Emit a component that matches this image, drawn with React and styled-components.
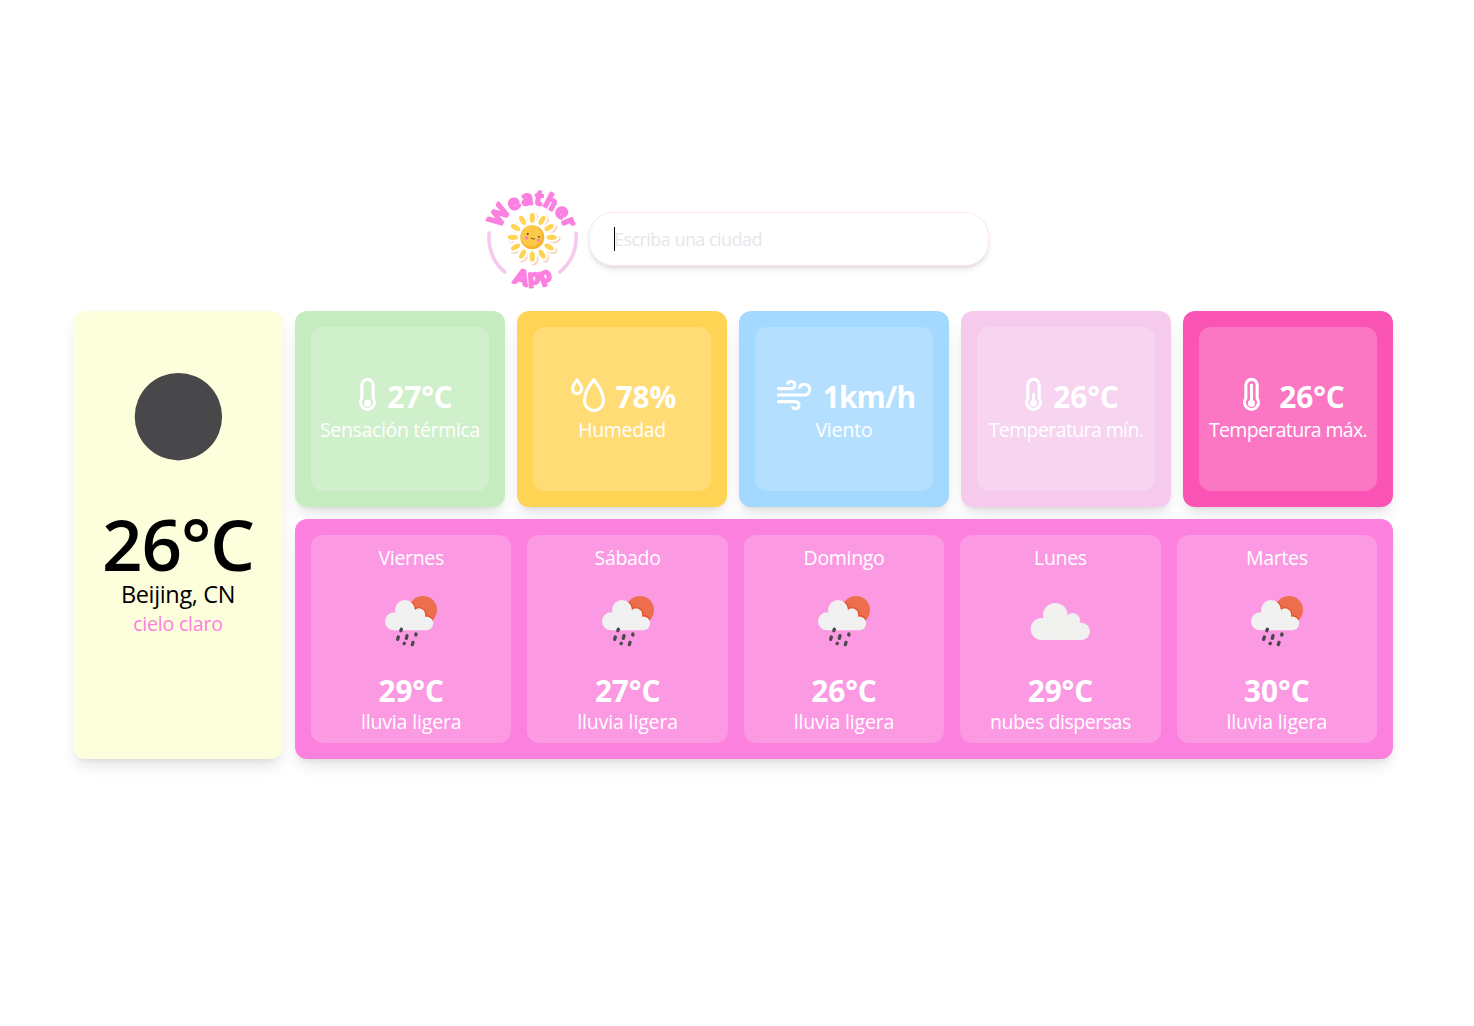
import React from "react";
import styled, { createGlobalStyle } from "styled-components";

const GlobalStyle = createGlobalStyle`
  *, *::before, *::after { box-sizing: border-box; }
  body {
    margin: 0;
    background: #fff;
    font-family: "Open Sans", "Noto Sans", sans-serif;
    font-size: 20px;
    line-height: 28px;
  }
`;

const Page = styled.main`
  width: 1466px;
  min-height: 1026px;
  padding: 185px 73px 0;
`;

const SearchBar = styled.form`
  display: flex;
  justify-content: center;
  align-items: center;
  height: 108px;
  margin-bottom: 18px;
  padding-left: 3px;
`;

const Logo = styled.svg`
  width: 110px;
  height: 115px;
  flex: none;
  margin: -3px -1px 0 0;
`;

const LogoText = styled.text`
  font-family: Lato, sans-serif;
  font-weight: 900;
  fill: #fc80df;
  stroke: #fc80df;
  stroke-width: 2.2px;
  stroke-linejoin: round;
`;

const Field = styled.label`
  position: relative;
  display: block;
  width: 400px;
  height: 54px;
`;

const Input = styled.input`
  width: 100%;
  height: 100%;
  padding: 0 24px;
  border: 1px solid #fce7f3;
  border-radius: 24px;
  outline: none;
  background: #fff;
  font: 400 18px/28px "Open Sans", sans-serif;
  letter-spacing: -0.55px;
  box-shadow: 0 4px 6px -1px rgba(0, 0, 0, 0.1), 0 2px 4px -2px rgba(0, 0, 0, 0.1);
  &::placeholder { color: #e5e7eb; opacity: 1; }
`;

const Caret = styled.span`
  position: absolute;
  left: 25px;
  top: 15px;
  width: 1px;
  height: 24px;
  background: #000;
`;

const Board = styled.section`
  display: grid;
  grid-template-columns: repeat(6, 210px);
  grid-template-rows: 196px 240px;
  gap: 12px;
`;

const Card = styled.article`
  border-radius: 12px;
  background: ${(p) => p.$color};
  box-shadow: 0 10px 15px -3px rgba(0, 0, 0, 0.1), 0 4px 6px -4px rgba(0, 0, 0, 0.1);
`;

const CurrentCard = styled(Card)`
  grid-row: span 2;
  display: flex;
  flex-direction: column;
  align-items: center;
  padding-top: 6px;
`;

const CurrentIcon = styled.svg`
  width: 200px;
  height: 200px;
`;

const CurrentTemp = styled.div`
  margin-top: -9px;
  font-size: 71px;
  line-height: 72px;
  font-weight: 600;
  letter-spacing: -1.2px;
`;

const City = styled.div`
  margin-top: -2px;
  font-size: 23.5px;
  line-height: 32px;
  font-weight: 400;
  letter-spacing: -0.35px;
`;

const Description = styled.div`
  font-size: 19.5px;
  letter-spacing: ${(p) => p.$track ?? -0.33}px;
  white-space: nowrap;
  color: ${(p) => p.$color || "inherit"};
`;

const StatCard = styled(Card)`
  display: flex;
  padding: 16px;
`;

const Panel = styled.div`
  flex: 1;
  min-width: 0;
  display: flex;
  flex-direction: column;
  align-items: center;
  justify-content: center;
  padding-top: 2px;
  border-radius: 12px;
  background: rgba(255, 255, 255, 0.2);
  color: #fff;
`;

const StatRow = styled.div`
  display: flex;
  align-items: center;
  gap: ${(p) => p.$gap}px;
  height: 40px;
  padding-left: ${(p) => p.$indent}px;
`;

const StatIcon = styled.svg`
  width: ${(p) => p.$width}px;
  height: 34px;
  margin-top: -2px;
  overflow: visible;
  fill: none;
  stroke: #fff;
  stroke-width: 2.2;
  stroke-linecap: round;
  stroke-linejoin: round;
`;

const Value = styled.div`
  height: 36px;
  font-size: 29.8px;
  line-height: 38px;
  font-weight: 700;
  letter-spacing: ${(p) => p.$track ?? -0.1}px;
`;

const ForecastCard = styled(Card)`
  grid-column: span 5;
  display: flex;
  gap: 16px;
  padding: 16px;
`;

const DayIcon = styled.svg`
  width: 100px;
  height: 100px;
`;

const PETALS = Array.from({ length: 12 }, (_, i) => i * 30);

function WeatherLogo() {
  return (
    <Logo viewBox="0 0 110 115">
      <defs>
        <path id="arcTop" d="M20.2 65 A33.2 33.2 0 1 1 85 65" />
        <path id="arcBottom" d="M12.5 83 A47 47 0 0 0 93.7 83" />
      </defs>
      <g fill="none" stroke="#f7c9ec" strokeWidth="3.6" strokeLinecap="round">
        <path d="M9.2 53 A44 44 0 0 0 24.8 92" />
        <path d="M96 53 A44 44 0 0 1 79.8 92" />
      </g>
      <g fill="#f9d3c2">
        {PETALS.map((a) => (
          <ellipse key={a} cx="53.8" cy="39" rx="4.6" ry="7" transform={`rotate(${a} 53.8 58.8)`} />
        ))}
      </g>
      <g fill="#fff">
        <circle cx="52.6" cy="57.5" r="17" />
        {PETALS.map((a) => (
          <ellipse key={a} cx="52.3" cy="37.4" rx="4.8" ry="7.2" transform={`rotate(${a} 52.3 57.2)`} />
        ))}
      </g>
      <g fill="#ffd454">
        {PETALS.map((a) => (
          <ellipse key={a} cx="52.3" cy="37.9" rx="2.6" ry="5.1" transform={`rotate(${a} 52.3 57.3)`} />
        ))}
      </g>
      <circle cx="52.3" cy="57.2" r="12" fill="#f7b52c" />
      <circle cx="51.2" cy="55.9" r="10.5" fill="#fdca48" />
      <circle cx="46.6" cy="57.9" r="1.8" fill="#fb80cf" />
      <circle cx="58.5" cy="60.2" r="1.8" fill="#fb80cf" />
      <circle cx="47.8" cy="54" r="0.9" fill="#4a2c20" />
      <circle cx="59" cy="56.8" r="0.9" fill="#4a2c20" />
      <path d="M50.8 57.7q.6 1.8 2 .8q1.3 1.5 2.2 0" fill="none" stroke="#4a2c20" strokeWidth="0.8" />
      <LogoText fontSize="20.5">
        <textPath href="#arcTop" startOffset="50%" textAnchor="middle" letterSpacing="1">Weather</textPath>
      </LogoText>
      <LogoText fontSize="20.5">
        <textPath href="#arcBottom" startOffset="51%" textAnchor="middle" letterSpacing="1.8">
          A<tspan dy="-2.6">pp</tspan>
        </textPath>
      </LogoText>
    </Logo>
  );
}

function Thermometer({ level }) {
  return (
    <StatIcon viewBox="0 0 12 24" $width={17}>
      <path d="M2 5a4 4 0 0 1 8 0V14.4A4.9 4.9 0 1 1 2 14.4Z" />
      <circle cx="6" cy="17.9" r="2.5" fill="#fff" stroke="none" />
      {level && <path d={level === "high" ? "M6 4.9V17" : "M6 11.7V17"} />}
    </StatIcon>
  );
}

const Drops = () => (
  <StatIcon viewBox="0 0 24 24" $width={34}>
    <path d="M16.1 1.2C13.2 4.8 9.5 10.6 9.5 15.8A6.7 7.1 0 0 0 22.9 15.8C22.9 10.6 19 4.8 16.1 1.2Z" />
    <path d="M4.3 1.3C2.8 3.2 1.1 5.6 1.1 7.7A3.2 3.2 0 0 0 7.5 7.7C7.5 5.6 5.8 3.2 4.3 1.3Z" />
  </StatIcon>
);

const Wind = () => (
  <StatIcon viewBox="0 0 24 24" $width={34}>
    <path d="M1 7.5H9.4A2.6 2.6 0 1 0 7.6 3.8" />
    <path d="M1 12H19.2A3.8 3.8 0 1 0 15.8 6.7" />
    <path d="M1 16.7H13.2A2.5 2.5 0 1 1 11.2 20.9" />
  </StatIcon>
);

const RainSun = () => (
  <DayIcon viewBox="183 156 300 300">
    <defs>
      <clipPath id="sunDisc"><circle cx="369" cy="270" r="42" /></clipPath>
    </defs>
    <circle cx="369" cy="270" r="42" fill="#ec6e4c" />
    <g clipPath="url(#sunDisc)" fill="#e2491f">
      <circle cx="315" cy="270" r="33" />
      <circle cx="357" cy="284" r="22" />
      <circle cx="379" cy="310" r="24" />
    </g>
    <g fill="#f1f1f1">
      <circle cx="282" cy="304" r="27" />
      <circle cx="315" cy="270" r="30" />
      <circle cx="357" cy="284" r="19" />
      <circle cx="379" cy="310" r="20.5" />
      <path d="M282 331H380V295L350 275H300L275 300Z" />
    </g>
    <g stroke="#48484a" strokeWidth="10" strokeLinecap="round">
      <path d="M304 328l-1.5 4M295 351l-2 7M321 347l-2 8M348 342l-.8 3M313 370l-.7 1M339 367l-2 7" />
    </g>
  </DayIcon>
);

const Cloud = () => (
  <DayIcon viewBox="166 156 300 300" fill="#f1f1f0">
    <circle cx="261" cy="327" r="33" />
    <circle cx="302" cy="286" r="37" />
    <circle cx="354" cy="301" r="22" />
    <circle cx="380" cy="334" r="25.7" />
    <path d="M261 360H380V310L345 285H290L262 300Z" />
  </DayIcon>
);

const STATS = [
  { color: "#c5ecbe", icon: <Thermometer />, indent: 12, gap: 11, value: "27°C", label: "Sensación térmica" },
  { color: "#ffd454", icon: <Drops />, indent: 3, gap: 11, value: "78%", label: "Humedad" },
  { color: "#a3d8ff", icon: <Wind />, indent: 4, gap: 12, value: "1km/h", valueTrack: -0.8, label: "Viento", track: -0.15 },
  { color: "#f6caec", icon: <Thermometer level="half" />, indent: 12, gap: 11, value: "26°C", label: "Temperatura mín.", track: -0.6 },
  { color: "#fa55b5", icon: <Thermometer level="high" />, indent: 12, gap: 19, value: "26°C", label: "Temperatura máx.", track: -0.65 },
];

const DAYS = [
  { day: "Viernes", icon: <RainSun />, temp: "29°C", text: "lluvia ligera", track: -0.15 },
  { day: "Sábado", icon: <RainSun />, temp: "27°C", text: "lluvia ligera", track: -0.15 },
  { day: "Domingo", icon: <RainSun />, temp: "26°C", text: "lluvia ligera", track: -0.15 },
  { day: "Lunes", icon: <Cloud />, temp: "29°C", text: "nubes dispersas", track: -0.45 },
  { day: "Martes", icon: <RainSun />, temp: "30°C", text: "lluvia ligera", track: -0.15 },
];

export default function App() {
  return (
    <>
      <GlobalStyle />
      <Page>
        <SearchBar>
          <WeatherLogo />
          <Field>
            <Input placeholder="Escriba una ciudad" />
            <Caret />
          </Field>
        </SearchBar>
        <Board>
          <CurrentCard $color="#fcfedc">
            <CurrentIcon viewBox="0 0 200 200">
              <circle cx="100.4" cy="99.7" r="43.7" fill="#48484a" />
            </CurrentIcon>
            <CurrentTemp>26°C</CurrentTemp>
            <City>Beijing, CN</City>
            <Description $color="#ff80df" $track={-0.2}>cielo claro</Description>
          </CurrentCard>
          {STATS.map((s) => (
            <StatCard key={s.label} $color={s.color}>
              <Panel>
                <StatRow $gap={s.gap} $indent={s.indent}>
                  {s.icon}
                  <Value $track={s.valueTrack}>{s.value}</Value>
                </StatRow>
                <Description $track={s.track}>{s.label}</Description>
              </Panel>
            </StatCard>
          ))}
          <ForecastCard $color="#fc80dd">
            {DAYS.map((d) => (
              <Panel key={d.day}>
                <Description>{d.day}</Description>
                {d.icon}
                <Value>{d.temp}</Value>
                <Description $track={d.track}>{d.text}</Description>
              </Panel>
            ))}
          </ForecastCard>
        </Board>
      </Page>
    </>
  );
}
